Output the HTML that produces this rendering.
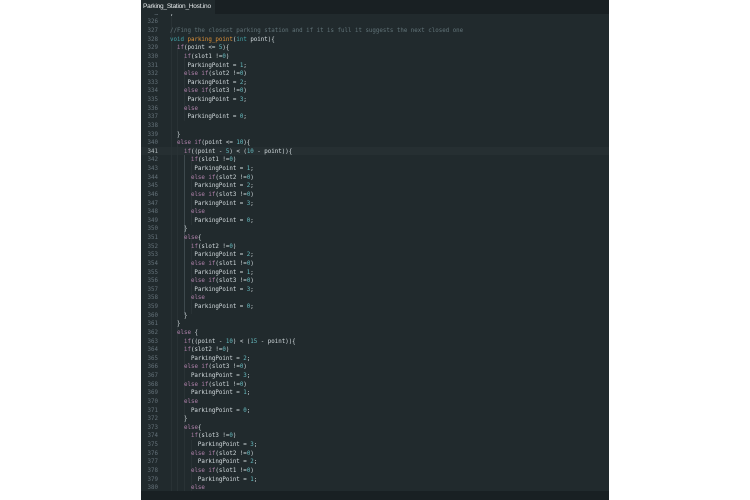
<!DOCTYPE html>
<html><head><meta charset="utf-8"><style>
html,body{margin:0;padding:0;background:#fff;width:750px;height:500px;overflow:hidden}
#p{position:absolute;left:141px;top:0;width:468px;height:500px;background:#212a2d;overflow:hidden}
#tb{position:absolute;left:0;top:0;width:468px;height:14px;background:#192023;z-index:3}
#tab{position:absolute;left:0;top:0;width:74px;height:14px;background:#212a2d;color:#e8ecee;font:6.5px/13px "Liberation Sans",sans-serif;letter-spacing:-.23px;padding-left:2px;box-sizing:border-box;white-space:nowrap}
#bb{position:absolute;left:0;top:491px;width:468px;height:9px;background:#192023;z-index:3}
#hl{position:absolute;left:0;top:146.9px;width:468px;height:8.6px;background:#262f32}
.g{position:absolute;width:1px;background:#293235}
#n,#c{position:absolute;top:9.8px;font:5.8px/8.63px "DejaVu Sans Mono",monospace;white-space:pre;filter:blur(.3px)}
#n{left:6px;width:11px;text-align:right;color:#65727a}
#n b{font-weight:normal;color:#b4bdc0}
#c{left:29px;color:#d5dde0}
i{font-style:normal}
.k{color:#b283ad}.t{color:#43a5aa}.f{color:#e09238}.m{color:#627479}.d{color:#66bcc1}
</style></head><body>
<div id="p">
<div id="hl"></div>
<div class="g" style="left:30px;top:14px;height:477px"></div>
<div class="g" style="left:36px;top:47px;height:444px"></div>
<div class="g" style="left:43px;top:56px;height:65px"></div>
<div class="g" style="left:43px;top:155px;height:160px;background:#3e494d"></div>
<div class="g" style="left:43px;top:345px;height:146px"></div>
<div class="g" style="left:50px;top:238px;height:76px"></div>
<div class="g" style="left:50px;top:155px;height:70px"></div>
<div class="g" style="left:50px;top:440px;height:51px"></div>
<div id="n">…
326
327
328
329
330
331
332
333
334
335
336
337
338
339
340
<b>341</b>
342
343
344
345
346
347
348
349
350
351
352
353
354
355
356
357
358
359
360
361
362
363
364
365
366
367
368
369
370
371
372
373
374
375
376
377
378
379
380</div>
<div id="c">;

<i class="m">//Fing the closest parking station and if it is full it suggests the next closed one</i>
<i class="t">void</i> <i class="f">parking_point</i>(<i class="t">int</i> point){
  <i class="k">if</i>(point &lt;= <i class="d">5</i>){
    <i class="k">if</i>(slot1 !=<i class="d">0</i>)
     ParkingPoint = <i class="d">1</i>;
    <i class="k">else if</i>(slot2 !=<i class="d">0</i>)
     ParkingPoint = <i class="d">2</i>;
    <i class="k">else if</i>(slot3 !=<i class="d">0</i>)
     ParkingPoint = <i class="d">3</i>;
    <i class="k">else</i>
     ParkingPoint = <i class="d">0</i>;

  }
  <i class="k">else if</i>(point &lt;= <i class="d">10</i>){
    <i class="k">if</i>((point - <i class="d">5</i>) &lt; (<i class="d">10</i> - point)){
      <i class="k">if</i>(slot1 !=<i class="d">0</i>)
       ParkingPoint = <i class="d">1</i>;
      <i class="k">else if</i>(slot2 !=<i class="d">0</i>)
       ParkingPoint = <i class="d">2</i>;
      <i class="k">else if</i>(slot3 !=<i class="d">0</i>)
       ParkingPoint = <i class="d">3</i>;
      <i class="k">else</i>
       ParkingPoint = <i class="d">0</i>;
    }
    <i class="k">else</i>{
      <i class="k">if</i>(slot2 !=<i class="d">0</i>)
       ParkingPoint = <i class="d">2</i>;
      <i class="k">else if</i>(slot1 !=<i class="d">0</i>)
       ParkingPoint = <i class="d">1</i>;
      <i class="k">else if</i>(slot3 !=<i class="d">0</i>)
       ParkingPoint = <i class="d">3</i>;
      <i class="k">else</i>
       ParkingPoint = <i class="d">0</i>;
    }
  }
  <i class="k">else</i> {
    <i class="k">if</i>((point - <i class="d">10</i>) &lt; (<i class="d">15</i> - point)){
    <i class="k">if</i>(slot2 !=<i class="d">0</i>)
      ParkingPoint = <i class="d">2</i>;
    <i class="k">else if</i>(slot3 !=<i class="d">0</i>)
      ParkingPoint = <i class="d">3</i>;
    <i class="k">else if</i>(slot1 !=<i class="d">0</i>)
      ParkingPoint = <i class="d">1</i>;
    <i class="k">else</i>
      ParkingPoint = <i class="d">0</i>;
    }
    <i class="k">else</i>{
      <i class="k">if</i>(slot3 !=<i class="d">0</i>)
        ParkingPoint = <i class="d">3</i>;
      <i class="k">else if</i>(slot2 !=<i class="d">0</i>)
        ParkingPoint = <i class="d">2</i>;
      <i class="k">else if</i>(slot1 !=<i class="d">0</i>)
        ParkingPoint = <i class="d">1</i>;
      <i class="k">else</i></div>
<div id="tb"><div id="tab">Parking_Station_Host.ino</div></div>
<div id="bb"></div>
</div>
</body></html>
